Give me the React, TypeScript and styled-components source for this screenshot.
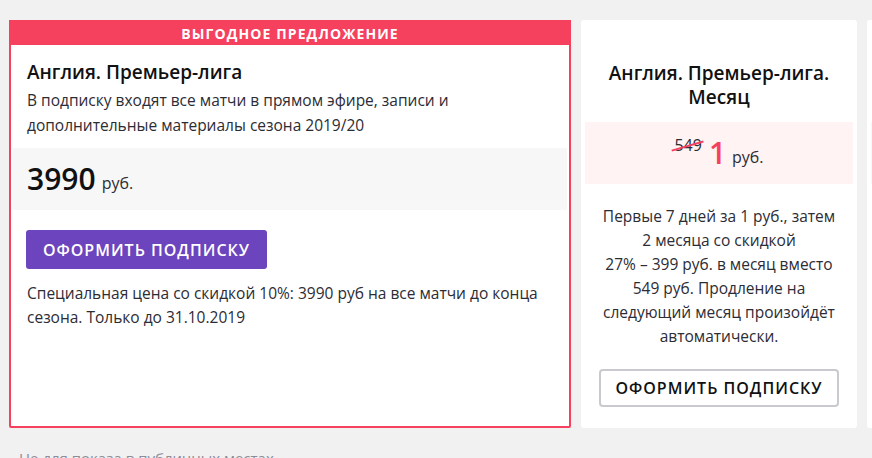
import React from "react";
import styled, { createGlobalStyle } from "styled-components";

const Global = createGlobalStyle`
  html, body { margin: 0; padding: 0; background: #f1f1f1; overflow: hidden; }
  body { font-family: "Open Sans", "Noto Sans", sans-serif; color: #2c2c35; }
  * { box-sizing: border-box; }
`;

const Page = styled.div`
  width: 872px;
  height: 458px;
  overflow: hidden;
  padding: 20px 0 0 9px;
`;

const Row = styled.div`
  display: flex;
  gap: 10px;
  align-items: stretch;
  width: max-content;
`;

const FeaturedCard = styled.div`
  width: 562px;
  height: 408px;
  background: #fff;
  border: 2px solid #f5405e;
  border-radius: 2px;
  display: flex;
  flex-direction: column;
`;

const Ribbon = styled.div`
  margin: -2px -2px 0;
  padding-top: 2px;
  height: 25px;
  background: #f5405e;
  color: #fff;
  font-size: 14px;
  font-weight: 700;
  letter-spacing: 1.1px;
  text-transform: uppercase;
  display: flex;
  align-items: center;
  justify-content: center;
`;

const Body = styled.div`
  padding: 15px 16px 0;
`;

const Title = styled.h3<{ $center?: boolean }>`
  margin: 0;
  font-size: 19px;
  line-height: 24px;
  font-weight: 600;
  color: #111;
  text-align: ${(p) => (p.$center ? "center" : "left")};
`;

const Desc = styled.p`
  margin: 4px 0 0;
  font-size: 15.5px;
  line-height: 25px;
  color: #2c2c35;
`;

const PriceBand = styled.div<{ $tint: string; $inset: number; $center?: boolean }>`
  height: 62px;
  margin: 0 ${(p) => p.$inset}px;
  background: ${(p) => p.$tint};
  display: flex;
  align-items: center;
  justify-content: ${(p) => (p.$center ? "center" : "flex-start")};
  padding: 0 14px;
`;

const BigPrice = styled.span<{ $accent?: boolean }>`
  font-size: 30px;
  font-weight: 600;
  color: ${(p) => (p.$accent ? "#f5405e" : "#111")};
  line-height: 1;
`;

const Currency = styled.span`
  font-size: 16px;
  color: #2c2c35;
  margin-left: 6px;
  position: relative;
  top: 4px;
`;

const OldPrice = styled.span`
  position: relative;
  font-size: 16px;
  color: #2c2c35;
  margin-right: 7px;
  top: -8px;
  &::after {
    content: "";
    position: absolute;
    left: -3px;
    right: -3px;
    top: 50%;
    height: 1.5px;
    background: #f5405e;
    transform: rotate(-16deg);
  }
`;

const Footer = styled.div`
  padding: 20px 16px 0 15px;
`;

const PrimaryButton = styled.button`
  width: 241px;
  height: 39px;
  border: none;
  border-radius: 3px;
  background: #6c44bd;
  color: #fff;
  font-family: inherit;
  font-size: 16px;
  font-weight: 600;
  letter-spacing: 1px;
  text-transform: uppercase;
  cursor: pointer;
`;

const Note = styled.p`
  margin: 12px 0 0 1px;
  font-size: 15.5px;
  line-height: 24px;
  color: #2c2c35;
`;

const PlanCard = styled.div`
  width: 276px;
  height: 408px;
  background: #fff;
  border-radius: 3px;
  display: flex;
  flex-direction: column;
  padding-top: 41px;
`;

const PlanTitle = styled.div`
  padding: 0 16px;
`;

const PlanDesc = styled.p`
  margin: 20px 0 0;
  padding: 0 10px;
  font-size: 15.5px;
  line-height: 24px;
  text-align: center;
  color: #2c2c35;
  white-space: nowrap;
`;

const OutlineButton = styled.button`
  align-self: center;
  margin-top: 21px;
  width: 240px;
  height: 38px;
  border: 2px solid #c9c9cf;
  border-radius: 4px;
  background: #fff;
  color: #111;
  font-family: inherit;
  font-size: 16px;
  font-weight: 600;
  letter-spacing: 1px;
  text-transform: uppercase;
  cursor: pointer;
`;

const Spacer = styled.div<{ $h: number }>`
  height: ${(p) => p.$h}px;
`;

const Disclaimer = styled.p`
  margin: 18px 0 0 10px;
  font-size: 15px;
  line-height: 24px;
  color: #8b8b99;
`;

export default function App() {
  return (
    <>
      <Global />
      <Page>
        <Row>
          <FeaturedCard>
            <Ribbon>Выгодное предложение</Ribbon>
            <Body>
              <Title>Англия. Премьер-лига</Title>
              <Desc>
                В подписку входят все матчи в прямом эфире, записи и
                <br />
                дополнительные материалы сезона 2019/20
              </Desc>
            </Body>
            <Spacer $h={10} />
            <PriceBand $tint="#f7f7f7" $inset={2}>
              <BigPrice>3990</BigPrice>
              <Currency>руб.</Currency>
            </PriceBand>
            <Footer>
              <PrimaryButton>Оформить подписку</PrimaryButton>
              <Note>
                Специальная цена со скидкой 10%: 3990 руб на все матчи до конца
                <br />
                сезона. Только до 31.10.2019
              </Note>
            </Footer>
          </FeaturedCard>
          <PlanCard>
            <PlanTitle>
              <Title $center>
                Англия. Премьер-лига.
                <br />
                Месяц
              </Title>
            </PlanTitle>
            <Spacer $h={13} />
            <PriceBand $tint="#fff3f4" $inset={4} $center>
              <OldPrice>549</OldPrice>
              <BigPrice $accent>1</BigPrice>
              <Currency>руб.</Currency>
            </PriceBand>
            <PlanDesc>
              Первые 7 дней за 1 руб., затем
              <br />
              2 месяца со скидкой
              <br />
              27% – 399 руб. в месяц вместо
              <br />
              549 руб. Продление на
              <br />
              следующий месяц произойдёт
              <br />
              автоматически.
            </PlanDesc>
            <OutlineButton>Оформить подписку</OutlineButton>
          </PlanCard>
          <PlanCard>
            <PlanTitle />
            <Spacer $h={61} />
            <PriceBand $tint="#f7f7f7" $inset={4} />
          </PlanCard>
        </Row>
        <Disclaimer>Не для показа в публичных местах</Disclaimer>
      </Page>
    </>
  );
}
